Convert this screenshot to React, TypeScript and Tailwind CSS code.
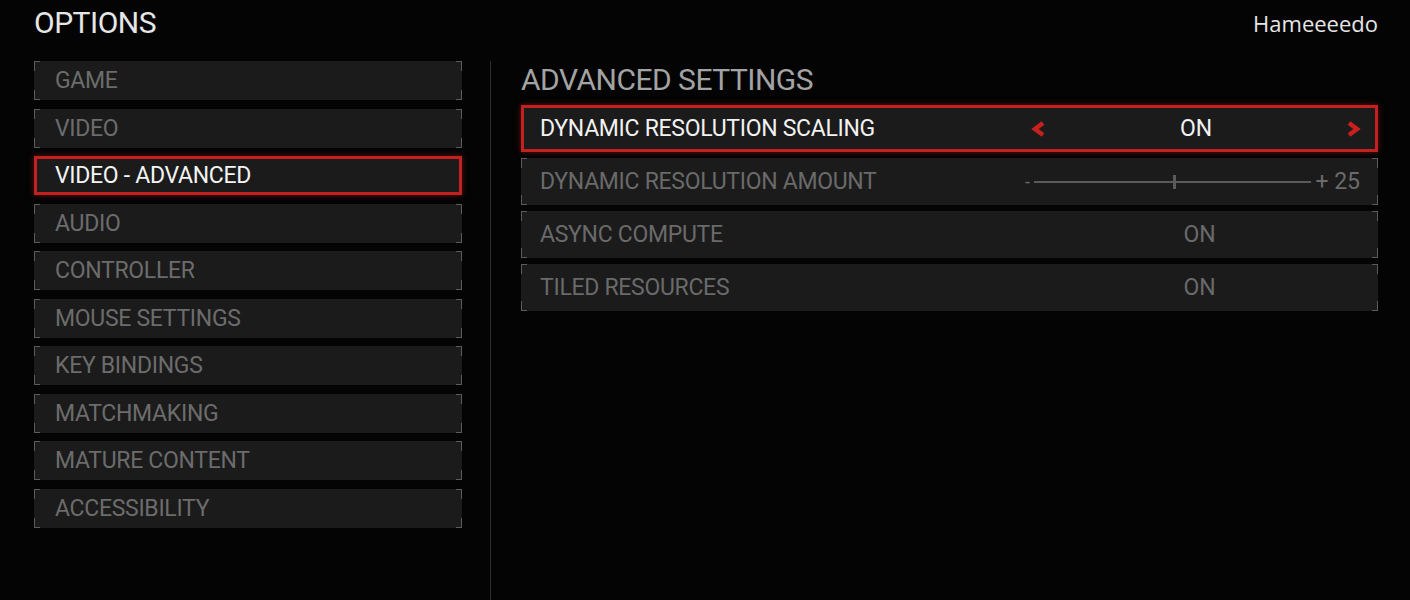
import React from 'react';

const menu = [
  'GAME',
  'VIDEO',
  'VIDEO - ADVANCED',
  'AUDIO',
  'CONTROLLER',
  'MOUSE SETTINGS',
  'KEY BINDINGS',
  'MATCHMAKING',
  'MATURE CONTENT',
  'ACCESSIBILITY',
];

const Corners = () => (
  <>
    <span className="absolute left-0 top-0 h-[10px] w-[6px] border-l border-t border-[#5c5c5c]" />
    <span className="absolute right-0 top-0 h-[10px] w-[6px] border-r border-t border-[#5c5c5c]" />
    <span className="absolute bottom-0 left-0 h-[10px] w-[6px] border-b border-l border-[#5c5c5c]" />
    <span className="absolute bottom-0 right-0 h-[10px] w-[6px] border-b border-r border-[#5c5c5c]" />
  </>
);

const Chevron = ({ dir }: { dir: 'left' | 'right' }) => (
  <svg width="18" height="18" viewBox="0 0 18 18" className="block">
    <polyline
      points={dir === 'left' ? '13,3 5,9 13,15' : '5,3 13,9 5,15'}
      fill="none"
      stroke="#c8201e"
      strokeWidth="4.5"
      strokeLinejoin="miter"
    />
  </svg>
);

function SettingRow({ label, children, active }: { label: string; children: React.ReactNode; active?: boolean }) {
  return (
    <div
      className={`relative flex h-[47px] items-center bg-[#1b1b1b] ${
        active ? 'border-[3px] border-[#c3201f] shadow-[0_0_6px_rgba(190,30,30,0.5)]' : ''
      }`}
    >
      {!active && <Corners />}
      <div
        className={`${active ? 'pl-[16px] text-[#f2f2f2]' : 'pl-[19px] text-[#6a6a6a]'} w-[500px] text-[23px] leading-none tracking-[-0.3px]`}
      >
        {label}
      </div>
      {children}
    </div>
  );
}

export default function App() {
  return (
    <div
      className="h-[600px] w-[1410px] overflow-hidden bg-[#040404] text-white"
      style={{ fontFamily: 'Roboto, "Liberation Sans", sans-serif' }}
    >
      <div className="flex items-start justify-between pl-[34px] pr-[32px] pt-[6px]">
        <h1 className="text-[30px] leading-[34px] tracking-[-0.5px] text-[#e6e6e6]">OPTIONS</h1>
        <div
          className="pt-[4px] text-[22px] leading-[26px] text-[#e6e6e6]"
          style={{ fontFamily: '"Open Sans", sans-serif' }}
        >
          Hameeeedo
        </div>
      </div>

      <div className="flex pt-[21px]">
        {/* left menu */}
        <div className="ml-[34px] flex w-[428px] flex-col gap-[8.5px]">
          {menu.map((m) => {
            const active = m === 'VIDEO - ADVANCED';
            return (
              <div
                key={m}
                className={`relative flex h-[39px] items-center bg-[#1b1b1b] ${
                  active ? 'border-[3px] border-[#c3201f] shadow-[0_0_6px_rgba(190,30,30,0.5)]' : ''
                }`}
              >
                {!active && <Corners />}
                <span
                  className={`${active ? 'pl-[18px] text-[#f4f4f4]' : 'pl-[21px] text-[#6c6c6c]'} text-[23px] leading-none tracking-[-0.3px]`}
                >
                  {m}
                </span>
              </div>
            );
          })}
        </div>

        {/* divider */}
        <div className="ml-[28px] h-[560px] w-px bg-[#2e2e2e]" />

        {/* right panel */}
        <div className="ml-[30px] flex w-[857px] flex-col">
          <h2 className="mb-[8px] mt-[2px] text-[30px] leading-[34px] tracking-[-0.5px] text-[#a3a3a3]">
            ADVANCED SETTINGS
          </h2>
          <div className="flex flex-col gap-[6px]">
            <SettingRow label="DYNAMIC RESOLUTION SCALING" active>
              <div className="flex flex-1 items-center pr-[13px]">
                <div className="ml-[6px]">
                  <Chevron dir="left" />
                </div>
                <div className="flex-1 text-center text-[23px] leading-none text-[#f2f2f2]">ON</div>
                <Chevron dir="right" />
              </div>
            </SettingRow>
            <SettingRow label="DYNAMIC RESOLUTION AMOUNT">
              <div className="flex flex-1 items-center pr-[18px] text-[#6a6a6a]">
                <span className="ml-[4px] text-[18px] leading-none">-</span>
                <div className="relative ml-[4px] h-[2px] flex-1 bg-[#5a5a5a]">
                  <span className="absolute left-[50%] top-[-6px] h-[14px] w-[3px] bg-[#5a5a5a]" />
                </div>
                <span className="ml-[4px] text-[23px] leading-none">+ 25</span>
              </div>
            </SettingRow>
            <SettingRow label="ASYNC COMPUTE">
              <div className="flex-1 text-center text-[23px] leading-none text-[#6a6a6a]">ON</div>
            </SettingRow>
            <SettingRow label="TILED RESOURCES">
              <div className="flex-1 text-center text-[23px] leading-none text-[#6a6a6a]">ON</div>
            </SettingRow>
          </div>
        </div>
      </div>
    </div>
  );
}
